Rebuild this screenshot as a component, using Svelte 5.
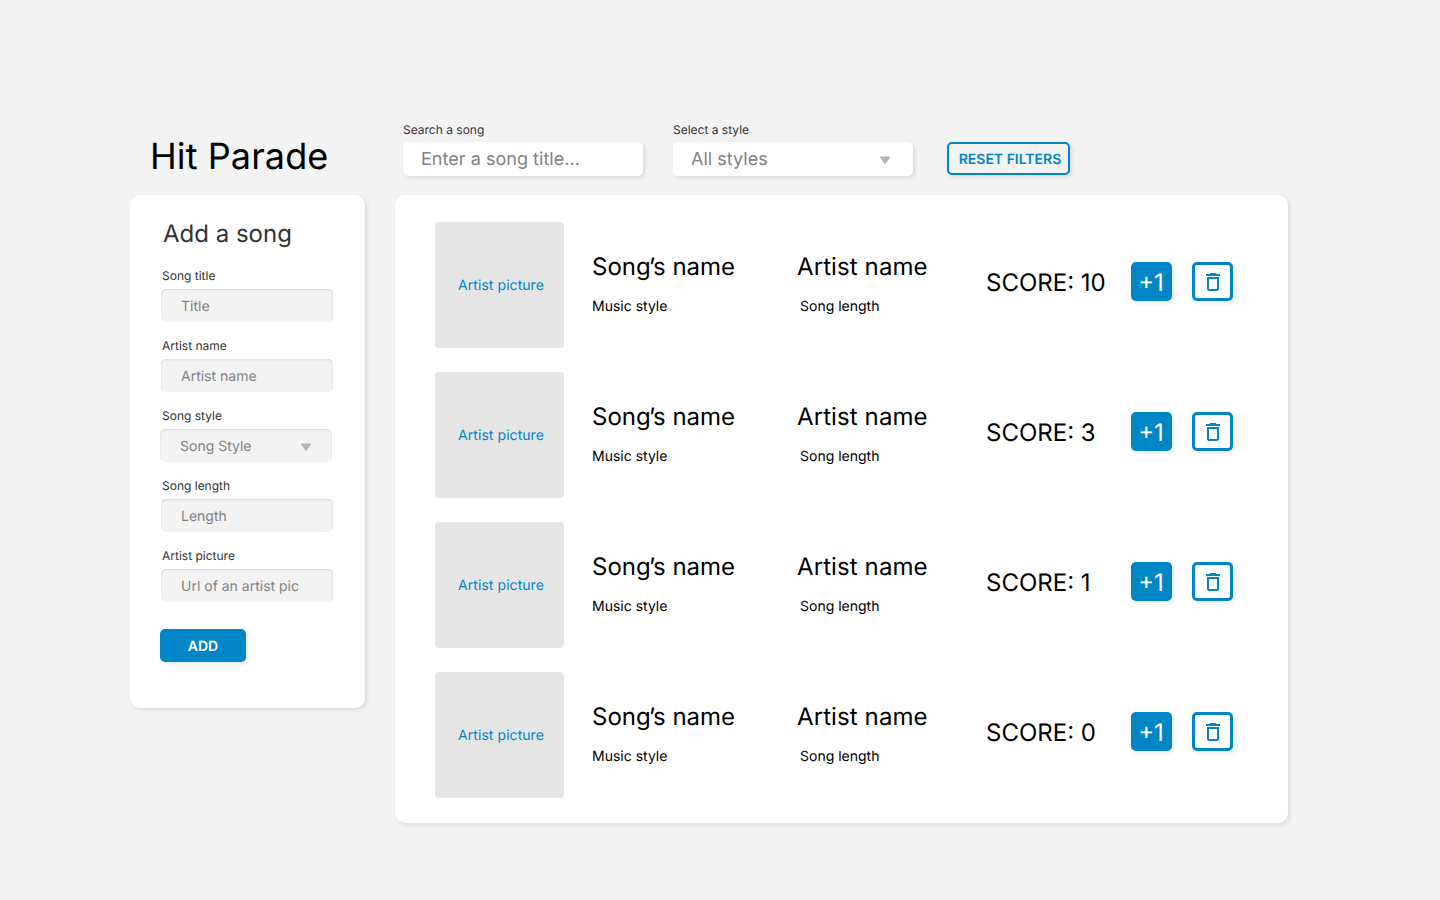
<script>
  const fields = [
    { label: 'Song title', placeholder: 'Title' },
    { label: 'Artist name', placeholder: 'Artist name' },
    { label: 'Song style', placeholder: 'Song Style', select: true },
    { label: 'Song length', placeholder: 'Length' },
    { label: 'Artist picture', placeholder: 'Url of an artist pic' }
  ];

  let songs = $state([{ score: 10 }, { score: 3 }, { score: 1 }, { score: 0 }]);

  function remove(index) {
    songs.splice(index, 1);
  }
</script>

{#snippet arrow()}
  <svg class="arrow" width="12" height="9" viewBox="0 0 12 9" aria-hidden="true">
    <path d="M1.2 1H10.8L6 7.8Z" stroke-width="1" stroke-linejoin="round" />
  </svg>
{/snippet}

<main>
  <header>
    <h1>Hit Parade</h1>
    <div class="filter">
      <span class="label">Search a song</span>
      <div class="control">Enter a song title...</div>
    </div>
    <div class="filter">
      <span class="label">Select a style</span>
      <div class="control">All styles {@render arrow()}</div>
    </div>
    <button class="reset">RESET FILTERS</button>
  </header>

  <div class="content">
    <section class="card form">
      <h2>Add a song</h2>
      {#each fields as field}
        <div class="field" class:select={field.select}>
          <span class="label">{field.label}</span>
          <div class="input">
            {field.placeholder}
            {#if field.select}{@render arrow()}{/if}
          </div>
        </div>
      {/each}
      <button class="add">ADD</button>
    </section>

    <section class="card list">
      {#each songs as song, i}
        <article>
          <div class="picture">Artist picture</div>
          <div class="info song">
            <h3>Song<span class="apostrophe">’</span>s name</h3>
            <p>Music style</p>
          </div>
          <div class="info artist">
            <h3>Artist name</h3>
            <p>Song length</p>
          </div>
          <div class="score">SCORE: {song.score}</div>
          <button class="vote" onclick={() => song.score++}>+1</button>
          <button class="delete" aria-label="Delete" onclick={() => remove(i)}>
            <svg width="24" height="24" viewBox="0 0 24 24">
              <path d="M6 19c0 1.1.9 2 2 2h8c1.1 0 2-.9 2-2V7H6v12zM8 9h8v10H8V9zm7.5-5-1-1h-5l-1 1H5v2h14V4h-3.5z" />
            </svg>
          </button>
        </article>
      {/each}
    </section>
  </div>
</main>

<style>
  :global(body) {
    background: #f3f3f3;
  }

  main {
    box-sizing: border-box;
    width: 1440px;
    height: 900px;
    padding: 122px 0 0 130px;
    background: #f3f3f3;
    font-family: Inter, sans-serif;
    text-rendering: geometricPrecision;
    color: #000;
  }

  h1, h2, h3, p {
    margin: 0;
    font-weight: 400;
  }

  button {
    box-sizing: border-box;
    padding: 0;
    border: 0;
    border-radius: 5px;
    font-family: inherit;
    text-rendering: inherit;
    box-shadow: 2px 2px 4px rgba(0, 0, 0, 0.1);
    display: flex;
    align-items: center;
    justify-content: center;
  }

  header {
    display: flex;
    height: 73px;
  }

  h1 {
    width: 253px;
    padding: 12px 0 0 20px;
    font-size: 36px;
    line-height: 44px;
    letter-spacing: 0.1px;
    white-space: nowrap;
  }

  .label {
    display: block;
    font-size: 12px;
    line-height: 15px;
    color: #333;
  }

  .filter {
    width: 240px;
    margin-right: 30px;
  }

  .control {
    box-sizing: border-box;
    display: flex;
    align-items: center;
    justify-content: space-between;
    height: 34px;
    margin-top: 5px;
    padding: 1px 22px 0 18px;
    border-radius: 5px;
    background: #fff;
    box-shadow: 2px 2px 4px rgba(0, 0, 0, 0.1);
    font-size: 18px;
    letter-spacing: 0.03px;
    color: #828282;
  }

  .arrow {
    fill: #b5b5b5;
    stroke: #b5b5b5;
    margin-top: 2px;
  }

  .reset {
    width: 123px;
    height: 33px;
    margin: 20px 0 0 4px;
    padding: 1px 0 0 3px;
    border: 2px solid #0085c7;
    background: #f3f3f3;
    color: #0085c7;
    font-size: 14px;
    font-weight: 600;
  }

  .content {
    display: flex;
    align-items: flex-start;
    gap: 30px;
  }

  .card {
    box-sizing: border-box;
    border-radius: 10px;
    background: #fff;
    box-shadow: 2px 2px 4px rgba(0, 0, 0, 0.1);
  }

  .form {
    width: 235px;
    height: 513px;
    padding: 24px 32px 0 31px;
  }

  h2 {
    margin: 0 0 20px 2px;
    font-size: 24px;
    line-height: 29px;
    color: #333;
  }

  .field {
    margin-bottom: 16px;
  }

  .field .label {
    margin: 0 0 6px 1px;
  }

  .input {
    box-sizing: border-box;
    display: flex;
    align-items: center;
    justify-content: space-between;
    width: 172px;
    height: 33px;
    padding: 2px 20px 0;
    border-radius: 5px;
    background: #f3f3f3;
    box-shadow: inset 0 1px 2px rgba(0, 0, 0, 0.12);
    font-size: 14px;
    line-height: 17px;
    color: #828282;
    white-space: nowrap;
  }

  .select .input {
    margin-left: -1px;
  }

  .add {
    width: 86px;
    height: 33px;
    margin: 27px 0 0 -1px;
    padding-top: 2px;
    background: #0085c7;
    color: #fff;
    font-size: 14px;
    font-weight: 600;
  }

  .list {
    display: flex;
    flex-direction: column;
    gap: 24px;
    width: 893px;
    height: 628px;
    padding: 27px 40px 0;
  }

  article {
    display: flex;
    height: 126px;
  }

  .picture {
    box-sizing: border-box;
    display: flex;
    align-items: center;
    justify-content: center;
    width: 129px;
    height: 126px;
    padding: 1px 0 0 3px;
    border-radius: 4px;
    background: #e5e5e5;
    font-size: 14px;
    line-height: 17px;
    letter-spacing: 0.06px;
    color: #0085c7;
  }

  .info {
    padding-top: 30px;
    white-space: nowrap;
  }

  .song {
    width: 205px;
    margin-left: 28px;
  }

  .artist {
    width: 189px;
  }

  .artist h3 {
    letter-spacing: 0.1px;
  }

  .artist p {
    padding-left: 3px;
  }

  h3 {
    margin-bottom: 17px;
    font-size: 24px;
    line-height: 29px;
  }

  .apostrophe {
    margin: 0 -2.4px 0 -1.6px;
  }

  p {
    font-size: 14px;
    line-height: 17px;
  }

  .score {
    width: 145px;
    padding-top: 46px;
    font-size: 24px;
    line-height: 29px;
    white-space: nowrap;
  }

  .vote,
  .delete {
    width: 41px;
    height: 39px;
    margin-top: 40px;
  }

  .vote {
    margin-right: 20px;
    padding: 2px 1px 0 0;
    background: #0085c7;
    color: #fff;
    font-size: 24px;
  }

  .delete {
    padding: 1px 0 0 1px;
    border: 3px solid #0085c7;
    background: #fff;
  }

  .delete svg {
    fill: #0085c7;
  }
</style>
